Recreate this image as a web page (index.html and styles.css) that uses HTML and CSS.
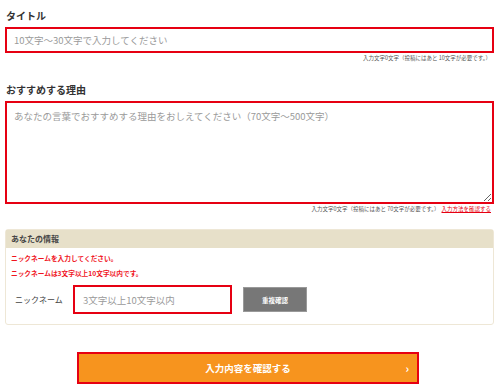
FILE: index.html
```html
<html>
<head>
	<title>投稿フォーム</title>
	<link rel="stylesheet" href="styles.css">
</head>
<body>
	<div id="post-form">
		<div class="field-label">タイトル</div>
		<input class="text-input title-input" type="text" placeholder="10文字〜30文字で入力してください">
		<div class="counter">入力文字0文字（投稿にはあと 10文字が必要です。）</div>

		<div class="field-label reason-label">おすすめする理由</div>
		<textarea class="text-input reason-input" placeholder="あなたの言葉でおすすめする理由をおしえてください（70文字〜500文字）"></textarea>
		<div class="counter">入力文字0文字（投稿にはあと 70文字が必要です。）<a class="help-link" href="#">入力方法を確認する</a></div>

		<div class="info-box">
			<div class="info-head">あなたの情報</div>
			<div class="errors">
				<div class="error">ニックネームを入力してください。</div>
				<div class="error">ニックネームは3文字以上10文字以内です。</div>
			</div>
			<div class="nick-row">
				<div class="nick-label">ニックネーム</div>
				<input class="text-input nick-input" type="text" placeholder="3文字以上10文字以内">
				<button class="check-btn">重複確認</button>
			</div>
		</div>

		<div class="submitDiv">
			<button class="submit-btn">入力内容を確認する<span class="chevron">&rsaquo;</span></button>
		</div>
	</div>
</body>
</html>
```

FILE: styles.css
```css
body {
	margin: 0;
	font-family: "Noto Sans CJK JP", "Noto Sans", sans-serif;
	color: #333;
	background: #fff;
}

#post-form {
	width: 489px;
	padding: 0 6px 0 5px;
}

.field-label {
	font-size: 10px;
	line-height: 14px;
	font-weight: bold;
	margin-top: 9px;
	padding-left: 1px;
}

.reason-label {
	margin-top: 20px;
}

.text-input {
	display: block;
	box-sizing: border-box;
	width: 100%;
	margin: 4px 0 0 0;
	border: 2px solid #e60012;
	border-radius: 0;
	font-family: "Noto Sans CJK JP", "Noto Sans", sans-serif;
	font-size: 9.5px;
	color: #333;
	background: #fff;
	outline: none;
}

.text-input::placeholder {
	color: #9a9a9a;
}

.title-input {
	height: 26px;
	padding: 0 7px;
}

.reason-input {
	height: 103px;
	padding: 5px 7px;
	line-height: 16px;
	resize: vertical;
}

.counter {
	font-size: 5.5px;
	line-height: 10px;
	color: #555;
	text-align: right;
	padding-right: 3px;
}

.help-link {
	color: #e60012;
	margin-left: 2px;
}

.info-box {
	margin-top: 15px;
	width: 487px;
	border: 1px solid #eee7d6;
	border-radius: 3px;
	padding-bottom: 10px;
}

.info-head {
	height: 18px;
	line-height: 18px;
	background: #e7e0c9;
	font-size: 8px;
	font-weight: bold;
	padding-left: 5px;
	color: #444;
}

.errors {
	padding: 4px 0 0 5px;
}

.error {
	font-size: 6.7px;
	line-height: 12px;
	font-weight: bold;
	color: #f0141e;
	margin-bottom: 3px;
}

.nick-row {
	display: flex;
	align-items: center;
	margin-top: 6px;
}

.nick-label {
	width: 67px;
	padding-left: 9px;
	box-sizing: border-box;
	font-size: 8px;
	color: #444;
}

.nick-input {
	width: 159px;
	height: 29px;
	margin: 0;
	padding: 0 8px;
	font-size: 9.5px;
}

.check-btn {
	margin-left: 11px;
	width: 64px;
	height: 25px;
	background: #777;
	border: 1px solid #999;
	color: #fff;
	font-family: "Noto Sans CJK JP", sans-serif;
	font-size: 6.5px;
	font-weight: bold;
	padding: 0;
}

.submitDiv {
	margin-top: 27px;
	padding-left: 72px;
}

.submit-btn {
	position: relative;
	width: 342px;
	height: 32px;
	background: #f7941e;
	border: 2px solid #e60012;
	color: #fff;
	font-family: "Noto Sans CJK JP", sans-serif;
	font-size: 9.5px;
	font-weight: bold;
	padding: 0;
}

.chevron {
	position: absolute;
	right: 8px;
	top: 6px;
	font-size: 11px;
	line-height: 16px;
}
```
